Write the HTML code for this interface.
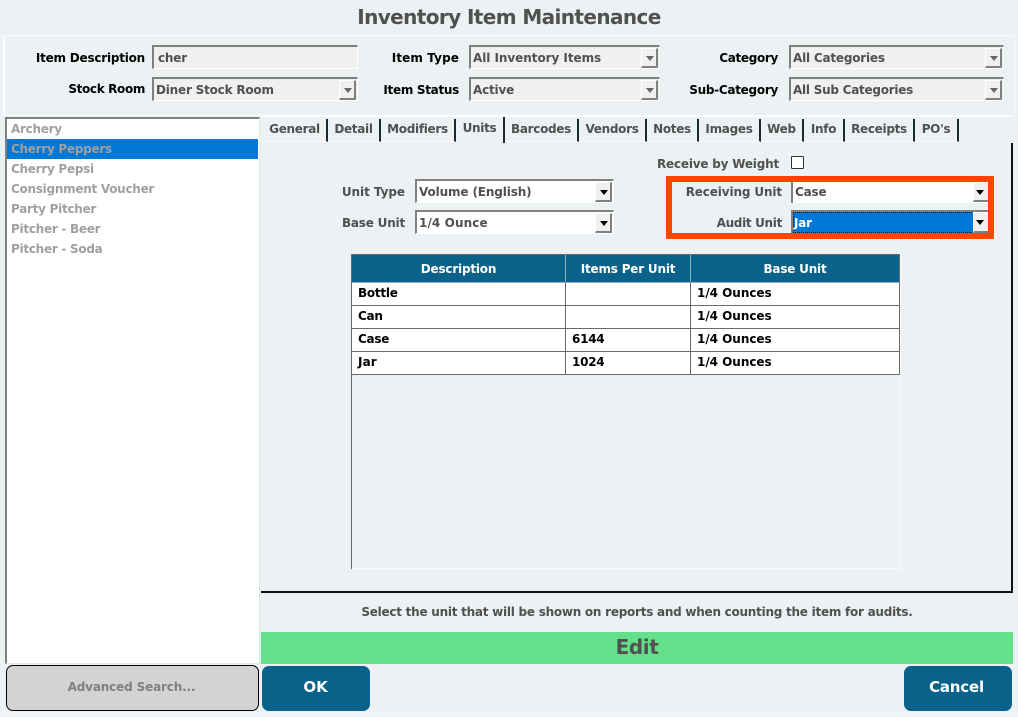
<!DOCTYPE html>
<html><head><meta charset="utf-8">
<style>
html,body{margin:0;padding:0;width:1018px;height:717px;overflow:hidden;background:#ecf1f4}
body{position:relative;font-family:"DejaVu Sans","Liberation Sans",sans-serif;font-weight:bold;font-size:12px;color:#505050}
div{position:absolute;box-sizing:border-box;white-space:nowrap}
.l{text-align:right;color:#000;line-height:16px;height:16px;letter-spacing:-.35px}
.g{color:#505050;letter-spacing:-.2px}
.c{height:24px;background:#f0f0f0;border-top:2px solid #808080;border-left:2px solid #808080;border-right:1px solid #fff;border-bottom:1px solid #fff;line-height:22px;padding-left:2px;color:#505050;letter-spacing:-.2px}
.c.w{background:#fff;color:#505050}
.b{right:1px;top:1px;width:17px;height:20px;background:#f0f0f0;border-right:2px solid #808080;border-bottom:2px solid #808080;border-top:1px solid #fff;border-left:1px solid #fff}
.b:after{content:"";position:absolute;left:4px;top:7px;border:4px solid transparent;border-top:5px solid #666;border-bottom:0}
.w .b:after{border-top-color:#000}
.n:after{left:2px}
.r{left:11px;color:#a0a0a0;line-height:20px;height:20px;letter-spacing:-.27px}
.t{top:119px;height:23px;line-height:21px;text-align:center;color:#505050;letter-spacing:-.3px;background:#ecf1f4;border-right:2px solid #1a2a33;border-bottom:1px solid #f7f9fa}
.h{top:255px;height:27px;background:#0a628a;color:#fff;text-align:center;line-height:28px;letter-spacing:-.2px;border-right:1px solid #8fb0bd}
.v{color:#000;line-height:22px;height:22px;letter-spacing:-.25px}
.o{letter-spacing:-.03px}
.hl{left:352px;width:548px;height:1px;background:#6a6a6a}
.vl{width:1px;top:282px;height:92px;background:#6a6a6a}
</style></head><body>
<div style="left:0;top:3px;width:1018px;text-align:center;font-size:20px;line-height:28px;color:#505050;letter-spacing:-.6px">Inventory Item Maintenance</div>

<div style="left:3px;top:35px;width:1012px;height:81px;border:1px solid #fbfcfc;border-width:1px 1px 1px 2px"></div>
<div class="l" style="left:0;width:145px;top:50px;letter-spacing:-.22px">Item Description</div>
<div class="c" style="left:152px;top:45px;width:206px;padding-left:4px">cher</div>
<div class="l" style="left:0;width:145px;top:81px">Stock Room</div>
<div class="c" style="left:152px;top:77px;width:206px">Diner Stock Room<div class="b"></div></div>
<div class="l" style="left:300px;width:159px;top:50px;letter-spacing:.1px">Item Type</div>
<div class="c" style="left:469px;top:45px;width:191px;letter-spacing:-.05px">All Inventory Items<div class="b"></div></div>
<div class="l" style="left:300px;width:159px;top:82px;letter-spacing:-.3px">Item Status</div>
<div class="c" style="left:469px;top:77px;width:191px">Active<div class="b"></div></div>
<div class="l" style="left:640px;width:138px;top:50px;letter-spacing:-.32px">Category</div>
<div class="c" style="left:789px;top:45px;width:215px">All Categories<div class="b"></div></div>
<div class="l" style="left:640px;width:138px;top:82px;letter-spacing:-.28px">Sub-Category</div>
<div class="c" style="left:789px;top:77px;width:215px;letter-spacing:-.25px">All Sub Categories<div class="b"></div></div>

<div style="left:5px;top:117px;width:255px;height:547px;background:#fff;border-top:2px solid #808080;border-left:2px solid #808080;border-right:1px solid #e6e6e6;border-bottom:1px solid #e6e6e6"></div>
<div style="left:7px;top:139px;width:251px;height:20px;background:#0078d7"></div>
<div class="r" style="top:119px">Archery</div>
<div class="r" style="top:139px">Cherry Peppers</div>
<div class="r" style="top:159px">Cherry Pepsi</div>
<div class="r" style="top:179px">Consignment Voucher</div>
<div class="r" style="top:199px">Party Pitcher</div>
<div class="r" style="top:219px">Pitcher - Beer</div>
<div class="r" style="top:239px">Pitcher - Soda</div>

<div style="left:261px;top:116px;width:752px;height:1px;background:#fbfcfc"></div>
<div class="t" style="left:263px;width:65px">General</div>
<div class="t" style="left:328px;width:53px">Detail</div>
<div class="t" style="left:381px;width:75px">Modifiers</div>
<div class="t" style="left:456px;width:49px;top:117px;height:26px;border-bottom:0;line-height:23px;z-index:2">Units</div>
<div class="t" style="left:505px;width:74px">Barcodes</div>
<div class="t" style="left:579px;width:68px">Vendors</div>
<div class="t" style="left:647px;width:52px">Notes</div>
<div class="t" style="left:699px;width:62px">Images</div>
<div class="t" style="left:761px;width:43px">Web</div>
<div class="t" style="left:804px;width:41px">Info</div>
<div class="t" style="left:845px;width:70px">Receipts</div>
<div class="t" style="left:915px;width:44px">PO's</div>

<div style="left:261px;top:143px;width:752px;height:450px;border-right:2px solid #111;border-bottom:2px solid #111"></div>

<div class="l g" style="left:600px;width:179px;top:156px">Receive by Weight</div>
<div style="left:791px;top:156px;width:13px;height:13px;background:#fff;border:1px solid #333;border-radius:1px"></div>

<div class="l g" style="left:300px;width:105px;top:184px;letter-spacing:-.05px">Unit Type</div>
<div class="c w" style="left:415px;top:179px;width:199px;letter-spacing:-.13px">Volume (English)<div class="b"></div></div>
<div class="l g" style="left:300px;width:105px;top:215px">Base Unit</div>
<div class="c w" style="left:415px;top:210px;width:199px;letter-spacing:.1px">1/4 Ounce<div class="b"></div></div>

<div style="left:666px;top:176px;width:328px;height:63px;border:6px solid #ff4500"></div>
<div class="l g" style="left:672px;width:110px;top:184px;letter-spacing:-.13px">Receiving Unit</div>
<div class="l g" style="left:672px;width:110px;top:215px;letter-spacing:-.32px">Audit Unit</div>
<div class="c w" style="left:791px;top:182px;width:197px;height:21px;border-top:0;border-right:0;border-bottom:0;line-height:20px;padding-left:2px">Case<div class="b n" style="right:0;top:0;border-right:0;width:15px"></div></div>
<div class="c w" style="left:791px;top:210px;width:197px;height:23px;border-right:0;border-bottom:0;padding:0"><div style="left:0;top:0;width:181px;height:21px;background:#0078d7;color:#fff;line-height:20px;padding-left:0;border:1px dotted #111;letter-spacing:-.2px">Jar</div><div class="b n" style="right:0;top:0;height:21px;border-right:0;width:15px"></div></div>

<div style="left:351px;top:254px;width:550px;height:1px;background:#6a6a6a"></div>
<div style="left:351px;top:254px;width:1px;height:315px;background:#5d6b75"></div>
<div style="left:899px;top:254px;width:1px;height:121px;background:#6a6a6a"></div>
<div style="left:900px;top:254px;width:1px;height:315px;background:#f8fafb"></div>
<div style="left:352px;top:568px;width:549px;height:1px;background:#f8fafb"></div>
<div class="h" style="left:352px;width:214px">Description</div>
<div class="h" style="left:566px;width:125px">Items Per Unit</div>
<div class="h" style="left:691px;width:208px;border-right:0">Base Unit</div>
<div style="left:352px;top:282px;width:547px;height:92px;background:#fff"></div>
<div class="hl" style="top:282px;background:#8fb0bd;width:547px"></div>
<div class="hl" style="top:305px"></div><div class="hl" style="top:328px"></div><div class="hl" style="top:351px"></div><div class="hl" style="top:374px"></div>
<div class="vl" style="left:565px"></div><div class="vl" style="left:690px"></div>
<div class="v" style="left:358px;top:282px">Bottle</div><div class="v o" style="left:697px;top:282px">1/4 Ounces</div>
<div class="v" style="left:358px;top:305px">Can</div><div class="v o" style="left:697px;top:305px">1/4 Ounces</div>
<div class="v" style="left:358px;top:328px">Case</div><div class="v" style="left:572px;top:328px">6144</div><div class="v o" style="left:697px;top:328px">1/4 Ounces</div>
<div class="v" style="left:358px;top:351px;letter-spacing:.1px">Jar</div><div class="v" style="left:572px;top:351px">1024</div><div class="v o" style="left:697px;top:351px">1/4 Ounces</div>

<div style="left:261px;top:604px;width:752px;text-align:center;line-height:17px;letter-spacing:-.25px;color:#505050">Select the unit that will be shown on reports and when counting the item for audits.</div>
<div style="left:261px;top:632px;width:752px;height:32px;background:#64e08a;text-align:center;font-size:20px;line-height:31px;color:#505050;letter-spacing:-.4px">Edit</div>

<div style="left:6px;top:665px;width:253px;height:46px;background:#d3d3d3;border:1px solid #000;border-radius:7px;text-align:center;line-height:42px;color:#808080;letter-spacing:-.15px;padding-right:2px">Advanced Search...</div>
<div style="left:262px;top:666px;width:108px;height:45px;background:#0a628a;border-radius:7px;text-align:center;line-height:42px;color:#fff;font-size:15px;padding-right:1px">OK</div>
<div style="left:904px;top:666px;width:108px;height:45px;background:#0a628a;border-radius:7px;text-align:center;line-height:42px;color:#fff;font-size:15px;letter-spacing:-.2px;padding-right:3px">Cancel</div>
<div style="left:0;top:713px;width:1018px;height:1px;background:#f8fafb"></div>
</body></html>
